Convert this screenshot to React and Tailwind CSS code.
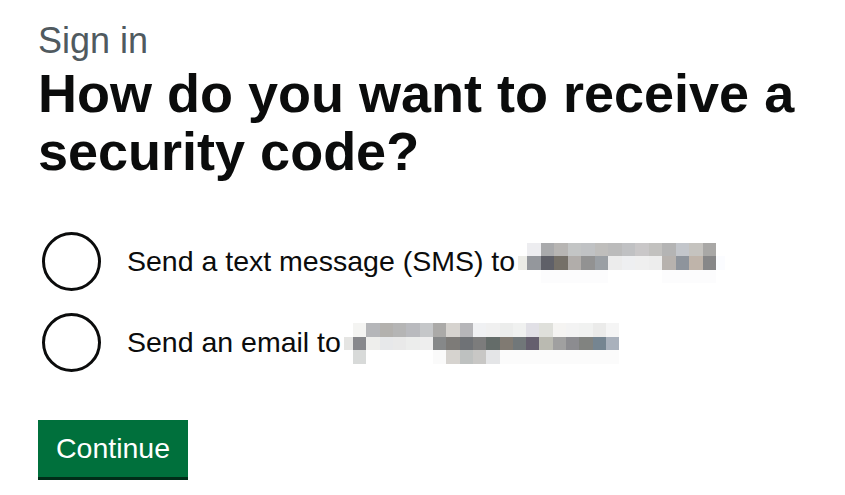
import React from "react";

// pixelated (redacted) contact details, block colours sampled from the screenshot
const phoneRows = [
  [
    "bg-white",
    "bg-[#ededf0]",
    "bg-[#a9aaac]",
    "bg-[#b7b5b3]",
    "bg-[#c3c5c5]",
    "bg-[#c0c2c4]",
    "bg-[#bfbebc]",
    "bg-[#bbbbbb]",
    "bg-[#c0c1c3]",
    "bg-[#c9c7c8]",
    "bg-[#c2c1bf]",
    "bg-[#b4b4b4]",
    "bg-[#c3c6cb]",
    "bg-[#c5c3bf]",
    "bg-[#a9a8a6]",
    "bg-white",
  ],
  [
    "bg-[#ebebe6]",
    "bg-[#94979c]",
    "bg-[#5f6068]",
    "bg-[#757068]",
    "bg-[#b1adaa]",
    "bg-[#929292]",
    "bg-[#9a9fa4]",
    "bg-[#ececec]",
    "bg-[#eeeff1]",
    "bg-[#efefef]",
    "bg-[#ededed]",
    "bg-[#b7b2ae]",
    "bg-[#8e949c]",
    "bg-[#bfb4aa]",
    "bg-[#878788]",
    "bg-[#fbfcff]",
  ],
  [
    "bg-white",
    "bg-white",
    "bg-[#fcfcfd]",
    "bg-[#fcfcfd]",
    "bg-[#fcfcfd]",
    "bg-[#fcfcfd]",
    "bg-[#fcfcfd]",
    "bg-white",
    "bg-white",
    "bg-white",
    "bg-white",
    "bg-[#fcfcfd]",
    "bg-[#fcfcfd]",
    "bg-[#fcfcfd]",
    "bg-[#fcfcfd]",
    "bg-white",
  ],
];

const emailRows = [
  [
    "bg-white",
    "bg-[#f4f4f2]",
    "bg-[#b5b6b9]",
    "bg-[#b3b1ae]",
    "bg-[#b5b5b5]",
    "bg-[#b9babe]",
    "bg-[#c5c7c9]",
    "bg-[#abaaa8]",
    "bg-[#d6d3cf]",
    "bg-[#b6b6b9]",
    "bg-[#f0f1f3]",
    "bg-[#f0f0f0]",
    "bg-[#ecedec]",
    "bg-[#f0f1f0]",
    "bg-[#e1e0e6]",
    "bg-[#dfe0db]",
    "bg-[#f5f4f2]",
    "bg-[#f3f3f3]",
    "bg-[#f1f2f1]",
    "bg-[#ebebea]",
    "bg-[#f5f5f5]",
  ],
  [
    "bg-[#e5e5e3]",
    "bg-[#87888c]",
    "bg-[#eeeeec]",
    "bg-[#e7e8ea]",
    "bg-[#e9e9e9]",
    "bg-[#ecedec]",
    "bg-[#eeeeee]",
    "bg-[#868889]",
    "bg-[#7d7b78]",
    "bg-[#6f7276]",
    "bg-[#7c7c7c]",
    "bg-[#646c69]",
    "bg-[#807a72]",
    "bg-[#717779]",
    "bg-[#655f6e]",
    "bg-[#babab1]",
    "bg-[#a0a0a0]",
    "bg-[#8c8c90]",
    "bg-[#818380]",
    "bg-[#758591]",
    "bg-[#a9b1bc]",
  ],
  [
    "bg-white",
    "bg-[#d8dad9]",
    "bg-white",
    "bg-white",
    "bg-white",
    "bg-white",
    "bg-white",
    "bg-[#fafafa]",
    "bg-[#d6d3cf]",
    "bg-[#bec1c0]",
    "bg-[#c8c7c5]",
    "bg-[#e4e5e7]",
    "bg-[#fbfbfb]",
    "bg-[#fbfbfb]",
    "bg-[#fbfbfb]",
    "bg-[#fbfbfb]",
    "bg-[#fbfbfb]",
    "bg-[#fbfbfb]",
    "bg-[#fbfbfb]",
    "bg-[#fbfbfb]",
    "bg-[#fbfbfb]",
  ],
];

function Redacted({ rows, cols, className }) {
  return (
    <div className={`grid grid-rows-[repeat(3,13.5px)] ${cols} ${className}`}>
      {rows.flat().map((bg, i) => (
        <div key={i} className={bg} />
      ))}
    </div>
  );
}

function RadioItem({ label, children }) {
  return (
    <label className="flex items-center h-[66px] cursor-pointer">
      <span className="ml-[3.5px] w-[59px] h-[59px] rounded-full border-[3px] border-[#0b0c0c] bg-white shrink-0" />
      <span className="ml-[26.5px] text-[28.5px] leading-[36px] text-[#0b0c0c] whitespace-nowrap">
        {label}
      </span>
      {children}
    </label>
  );
}

export default function App() {
  return (
    <div className="min-h-screen bg-white px-[38px] pt-[18px] font-['Liberation_Sans',Arial,sans-serif]">
      <span className="block text-[36px] leading-[45px] text-[#505a5f]">
        Sign in
      </span>
      <h1 className="mt-[1px] text-[54px] leading-[58px] font-bold text-[#0b0c0c]">
        How do you want to receive a security code?
      </h1>

      <div className="mt-[48px] flex flex-col gap-[15px]">
        <RadioItem label="Send a text message (SMS) to">
          <Redacted
            rows={phoneRows}
            cols="grid-cols-[9px_repeat(14,13.5px)_9px]"
            className="ml-[3px] mt-[4px]"
          />
        </RadioItem>
        <RadioItem label="Send an email to">
          <Redacted
            rows={emailRows}
            cols="grid-cols-[9px_repeat(20,13.33px)]"
            className="ml-[3px] mt-[3px]"
          />
        </RadioItem>
      </div>

      <button
        type="button"
        className="mt-[45px] w-[150px] h-[57px] flex items-center justify-center bg-[#00703c] text-white text-[28.5px] leading-none shadow-[0_3px_0_#002d18]"
      >
        Continue
      </button>
    </div>
  );
}
